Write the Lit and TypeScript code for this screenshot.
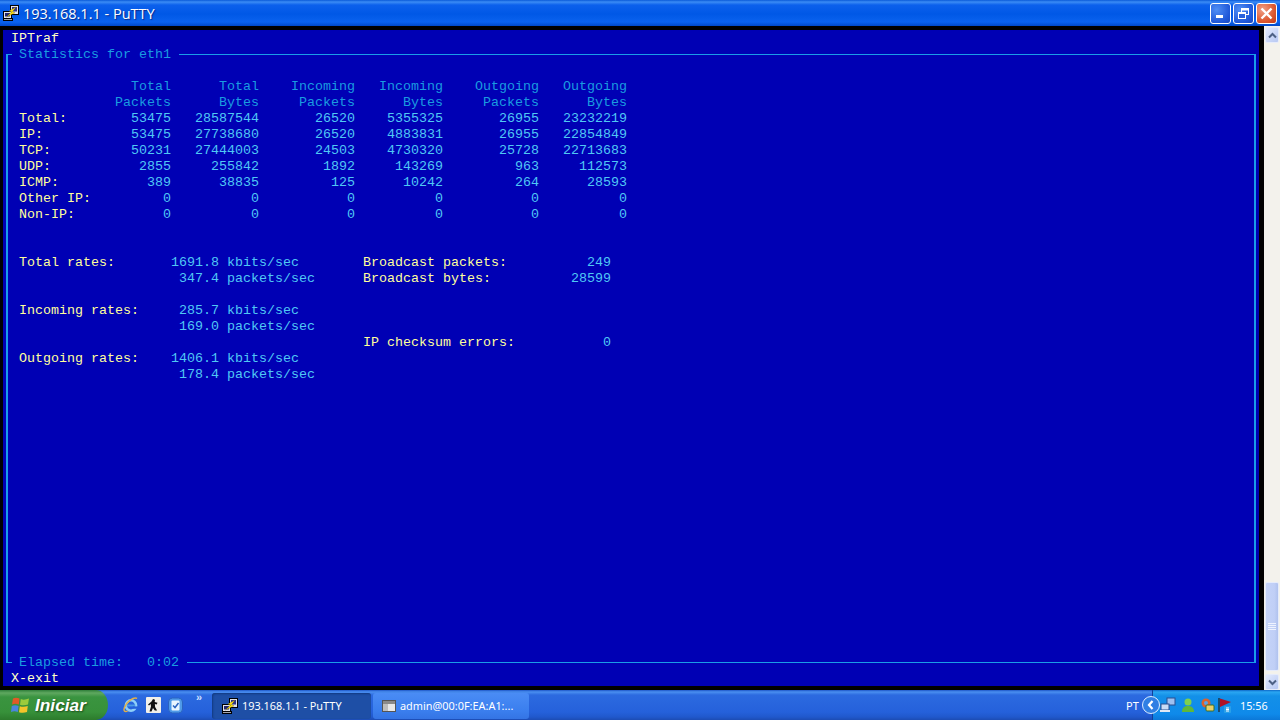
import { LitElement, html, css } from "lit";
import { customElement } from "lit/decorators.js";

const tableHead = [
  ["Total", "Total", "Incoming", "Incoming", "Outgoing", "Outgoing"],
  ["Packets", "Bytes", "Packets", "Bytes", "Packets", "Bytes"],
];
const tableRows: [string, string[]][] = [
  ["Total:", ["53475", "28587544", "26520", "5355325", "26955", "23232219"]],
  ["IP:", ["53475", "27738680", "26520", "4883831", "26955", "22854849"]],
  ["TCP:", ["50231", "27444003", "24503", "4730320", "25728", "22713683"]],
  ["UDP:", ["2855", "255842", "1892", "143269", "963", "112573"]],
  ["ICMP:", ["389", "38835", "125", "10242", "264", "28593"]],
  ["Other IP:", ["0", "0", "0", "0", "0", "0"]],
  ["Non-IP:", ["0", "0", "0", "0", "0", "0"]],
];
const ends = [19, 30, 42, 53, 65, 76];

function line(parts: { at: number; text: string; cls: string; right?: boolean }[]) {
  let col = 0;
  const out: unknown[] = [];
  for (const p of parts) {
    const start = p.right ? p.at - p.text.length : p.at;
    if (start > col) out.push(" ".repeat(start - col));
    out.push(html`<span class=${p.cls}>${p.text}</span>`);
    col = start + p.text.length;
  }
  return html`<div class="row">${out}</div>`;
}

const rates: { label?: string; num: string; unit: string; extra?: [string, string] }[] = [
  { label: "Total rates:", num: "1691.8", unit: "kbits/sec", extra: ["Broadcast packets:", "249"] },
  { num: "347.4", unit: "packets/sec", extra: ["Broadcast bytes:", "28599"] },
  { num: "", unit: "" },
  { label: "Incoming rates:", num: "285.7", unit: "kbits/sec" },
  { num: "169.0", unit: "packets/sec" },
  { num: "", unit: "", extra: ["IP checksum errors:", "0"] },
  { label: "Outgoing rates:", num: "1406.1", unit: "kbits/sec" },
  { num: "178.4", unit: "packets/sec" },
];

const puttyIcon = (s: number) => html`<svg width=${s} height=${s} viewBox="0 0 16 16">
  <rect x="7.500" y="0.500" width="8" height="9" fill="#e4e4ea" stroke="#000"/>
  <rect x="9" y="2" width="5" height="4.500" fill="#2f3488"/>
  <rect x="0.500" y="6.500" width="8" height="7" fill="#e4e4ea" stroke="#000"/>
  <rect x="2" y="8" width="5" height="3.500" fill="#23276e"/>
  <rect x="0.500" y="13.500" width="9" height="2" fill="#a8a8b0" stroke="#000"/>
  <path d="M13 2 L6 6 L8.600 7 L3.500 12 L12 7.800 L9.500 6.800 Z" fill="#ffe414" stroke="#5e4f00" stroke-width=".3"/>
</svg>`;

const flag = html`<svg width="18" height="17" viewBox="0 0 18 17">
  <path d="M2 1.500 Q5 0 8.500 1.500 L7.800 7.500 Q4.500 6 1 7.500 Z" fill="#e05a28"/>
  <path d="M9.800 2 Q13 3.500 18 1.500 L17 7.500 Q13 9 9 7.800 Z" fill="#9ccb3c"/>
  <path d="M.8 9 Q4 7.500 7.600 9 L6.800 15 Q3.500 13.500 0 15 Z" fill="#4a86de"/>
  <path d="M8.800 9.200 Q12.500 10.500 16.800 9 L16 15 Q12 16.500 8 15.200 Z" fill="#f4c42a"/>
</svg>`;

@customElement("app-root")
export class AppRoot extends LitElement {
  static styles = css`
    :host { display: block; width: 1280px; height: 720px; overflow: hidden; background: #000; }
    .win { display: flex; flex-direction: column; height: 720px; }
    .title {
      height: 26px; flex: none; display: flex; align-items: center; padding: 0 2px 0 3px; gap: 4px;
      background: linear-gradient(180deg, #0a5ad8 0, #3b8cf5 2px, #0c60ec 5px, #0058e6 14px, #0a62ee 22px, #0048c8 26px);
      color: #fff; font: 14.500px "Open Sans", sans-serif; text-shadow: 1px 1px 1px #0a2a8a;
    }
    .title-text { flex: 1; }
    .wbtns { display: flex; gap: 2px; padding-right: 1px; }
    .wb {
      width: 21px; height: 21px; box-sizing: border-box; border: 1px solid #fff; border-radius: 3px;
      background: radial-gradient(circle at 30% 30%, #4f8ef5, #1f57d8 70%, #1a49c0);
      display: flex; align-items: center; justify-content: center;
    }
    .wb.close { background: radial-gradient(circle at 30% 30%, #f0a088, #dd5a32 60%, #c23a18); }
    .main { height: 664px; flex: none; display: flex; background: #000; }
    .termwrap { width: 1264px; box-sizing: border-box; padding: 4px 5px 4px 3px; flex: none; }
    .term {
      height: 656px; background: #0000b4; font: 13.333px/16px "Liberation Mono", monospace;
      color: #ffffa8; display: flex; flex-direction: column;
    }
    .row { height: 16px; flex: none; white-space: pre; line-height: 18px; }
    .pale { color: #ffffc4; }
    .lab { color: #ffff9c; }
    .num { color: #50c8f4; }
    .head { color: #1a9ce0; }
    .box { flex: 1; display: flex; flex-direction: column; margin: 0 3px 0 3px; }
    .boxhead, .boxfoot { height: 16px; flex: none; display: flex; color: #1a9ce0; white-space: pre; line-height: 18px; }
    .c1, .c2 { box-sizing: border-box; }
    .c1 { width: 6px; margin-right: 7px; flex: none; }
    .c2 { flex: 1; margin-left: 8px; }
    .boxhead .c1 { margin-top: 8px; border-top: 1px solid #1a9ce8; border-left: 2px solid #1a9ce8; }
    .boxhead .c2 { margin-top: 8px; border-top: 1px solid #1a9ce8; border-right: 2px solid #1a9ce8; }
    .boxfoot .c1 { height: 9px; border-bottom: 1px solid #1a9ce8; border-left: 2px solid #1a9ce8; }
    .boxfoot .c2 { height: 9px; border-bottom: 1px solid #1a9ce8; border-right: 2px solid #1a9ce8; }
    .boxbody { flex: 1; border-left: 2px solid #1a9ce8; border-right: 2px solid #1a9ce8; padding-left: 11px; }
    .sb { width: 16px; flex: none; background: #f3f2ec; display: flex; flex-direction: column; padding: 1px 0 0 1px; box-sizing: border-box; }
    .sbb {
      width: 14px; height: 16px; flex: none; box-sizing: border-box; border: 1px solid #e6ecfb; border-radius: 2px;
      background: linear-gradient(135deg, #e2eafe, #b7c8f2); display: flex; align-items: center; justify-content: center;
    }
    .track { flex: 1; display: flex; flex-direction: column; justify-content: flex-end; padding-bottom: 3px; }
    .thumb {
      height: 89px; box-sizing: border-box; border: 1px solid #e6ecfb; border-radius: 2px; width: 14px;
      background: linear-gradient(90deg, #c4d3f8, #c0cff6 70%, #b0c2ee); display: flex; align-items: center; justify-content: center;
    }
    .task {
      height: 30px; flex: none; display: flex; align-items: stretch;
      background: linear-gradient(180deg, #1e56c8 0, #4a8ff0 2px, #2c6ae0 5px, #2561db 22px, #2058cc 27px, #1c4cb4 30px);
      color: #fff; font: 11px "Noto Sans", sans-serif;
    }
    .start {
      width: 108px; flex: none; display: flex; align-items: center; gap: 6px; padding-left: 11px; box-sizing: border-box;
      border-radius: 0 12px 12px 0 / 0 15px 15px 0;
      background: linear-gradient(180deg, #2f7f3a 0, #5fa860 3px, #3a9440 7px, #37913a 22px, #2c7a2c 30px);
      color: #fff; font: italic bold 17.300px "Liberation Sans", sans-serif; text-shadow: 1px 1px 2px #1a4a1a;
    }
    .quick { width: 104px; flex: none; display: flex; align-items: center; gap: 7px; padding-left: 14px; box-sizing: border-box; }
    .more { font: bold 11px "Liberation Sans", sans-serif; color: #cfe0ff; align-self: flex-start; margin-left: 6px; line-height: 14px; }
    .tb {
      height: 26px; align-self: center; margin-top: 1px; box-sizing: border-box; border-radius: 3px; display: flex; align-items: center; gap: 4px; padding-left: 9px;
      overflow: hidden; white-space: nowrap; font-size: 10.900px;
    }
    .tb.on { width: 159px; background: #1e4fa6; box-shadow: inset 1px 1px 2px #123a80; margin-right: 2px; padding-left: 10px; }
    .tb.off { width: 156px; background: linear-gradient(180deg, #4a8cf5, #3a7eee 70%, #3474e4); }
    .spacer { flex: 1; }
    .lang { width: 26px; display: flex; align-items: center; flex: none; }
    .tray {
      width: 128px; flex: none; box-sizing: border-box; display: flex; align-items: center; gap: 4px;
      background: linear-gradient(180deg, #0e68c8 0, #2aa6f2 2px, #1390e8 6px, #0f8aea 24px, #0c78d8 30px);
      border-left: 1px solid #123f98;
    }
    .chev { margin: 0 -4px 0 -11px; }
    .clock { margin-left: 3px; font-size: 10.800px; }
    .flagico { margin-left: -3px; }
    svg { display: block; flex: none; }
  `;

  render() {
    return html`<div class="win">
      <div class="title">
        ${puttyIcon(16)}
        <span class="title-text">193.168.1.1 - PuTTY</span>
        <div class="wbtns">
          <div class="wb"><svg width="13" height="13" viewBox="0 0 13 13"><rect x="2" y="8" width="7" height="3" fill="#fff"/></svg></div>
          <div class="wb"><svg width="13" height="13" viewBox="0 0 13 13" fill="none" stroke="#fff"><rect x="4.500" y="1.500" width="7" height="6"/><path d="M4.500 2.500h7" stroke-width="2"/><rect x="1.500" y="5.500" width="7" height="6" fill="#2a62dc"/><path d="M1.500 6h7" stroke-width="2"/></svg></div>
          <div class="wb close"><svg width="15" height="15" viewBox="0 0 15 15"><path d="M2.500 2.500l10 10M12.500 2.500l-10 10" stroke="#fff" stroke-width="2.400"/></svg></div>
        </div>
      </div>
      <div class="main">
        <div class="termwrap"><div class="term">
          ${line([{ at: 1, text: "IPTraf", cls: "pale" }])}
          <div class="box">
            <div class="boxhead"><span class="c1"></span><span>Statistics for eth1</span><span class="c2"></span></div>
            <div class="boxbody">
              <div class="row"></div>
              ${tableHead.map((h) => line(h.map((t, i) => ({ at: ends[i], text: t, cls: "head", right: true }))))}
              ${tableRows.map(([l, v]) => line([{ at: 0, text: l, cls: "lab" }, ...v.map((t, i) => ({ at: ends[i], text: t, cls: "num", right: true }))]))}
              <div class="row"></div><div class="row"></div>
              ${rates.map((r) => {
                const parts: { at: number; text: string; cls: string; right?: boolean }[] = [];
                if (r.label) parts.push({ at: 0, text: r.label, cls: "lab" });
                if (r.num) {
                  parts.push({ at: 25, text: r.num, cls: "num", right: true });
                  parts.push({ at: 26, text: r.unit, cls: "num" });
                }
                if (r.extra) {
                  parts.push({ at: 43, text: r.extra[0], cls: "lab" });
                  parts.push({ at: 74, text: r.extra[1], cls: "num", right: true });
                }
                return line(parts);
              })}
            </div>
            <div class="boxfoot"><span class="c1"></span><span>Elapsed time:   0:02</span><span class="c2"></span></div>
          </div>
          ${line([{ at: 1, text: "X-exit", cls: "pale" }])}
        </div></div>
        <div class="sb">
          <div class="sbb"><svg width="9" height="7" viewBox="0 0 9 7" fill="none" stroke="#4d6185" stroke-width="2"><path d="M1 5.500l3.500-3.500 3.500 3.500"/></svg></div>
          <div class="track"><div class="thumb"><svg width="8" height="8" viewBox="0 0 8 8" stroke="#eef3ff"><path d="M0 .5h8M0 2.500h8M0 4.500h8M0 6.500h8"/></svg></div></div>
          <div class="sbb"><svg width="9" height="7" viewBox="0 0 9 7" fill="none" stroke="#4d6185" stroke-width="2"><path d="M1 1.500l3.500 3.500 3.500-3.500"/></svg></div>
        </div>
      </div>
      <div class="task">
        <div class="start">${flag}<span>Iniciar</span></div>
        <div class="quick">
          <svg width="17" height="18" viewBox="0 0 18 18" fill="none"><circle cx="9.500" cy="9.500" r="5.500" stroke="#8fd0f8" stroke-width="2.600"/><path d="M5 9.500h9" stroke="#4c9ce8" stroke-width="2"/><path d="M16 2C12 .5 5 5 2.500 12c-1 3 0 4.500 3.500 3.500" stroke="#e2b048" stroke-width="1.500"/><rect x="11.500" y="10.500" width="5" height="2.500" fill="#2561db"/></svg>
          <svg width="15" height="16" viewBox="0 0 15 16"><rect width="15" height="16" rx="1" fill="#f2f0ea"/><path d="M7 2l2 .8-.3 2.200 2.800.8-.8 1.600-1.800-.5 .2 3 2 3.600H8.800L7 11 5.500 14.500H3.500l1.500-5L4.700 7 3 8.500 2 7.500 5.500 4.500Z" fill="#111"/></svg>
          <svg width="15" height="17" viewBox="0 0 15 17"><rect x=".5" y="1" width="14" height="15" rx="4" fill="#4f9ae8" stroke="#2a63c0"/><rect x="3.500" y="3.500" width="8" height="10" rx="1" fill="#eaf6ff"/><path d="M5 8.500l2 2 3.500-4.500" fill="none" stroke="#2a63c0" stroke-width="1.500"/></svg>
          <span class="more">»</span>
        </div>
        <div class="tb on">${puttyIcon(16)}<span>193.168.1.1 - PuTTY</span></div>
        <div class="tb off"><svg width="14" height="12" viewBox="0 0 14 12"><rect x=".5" y=".5" width="13" height="11" fill="#e8e8e8" stroke="#555"/><rect x="1" y="1" width="12" height="3" fill="#8a8a8a"/><rect x="1" y="4" width="5" height="7" fill="#bdbdbd"/></svg><span>admin@00:0F:EA:A1:...</span></div>
        <div class="spacer"></div>
        <div class="lang">PT</div>
        <div class="tray">
          <svg class="chev" width="18" height="18" viewBox="0 0 18 18"><circle cx="9" cy="9" r="8.500" fill="#2f7fe4" stroke="#dcecff"/><path d="M10.500 5L7 9l3.500 4" fill="none" stroke="#fff" stroke-width="2.200"/></svg>
          <svg width="16" height="16" viewBox="0 0 16 16"><rect x="7" y="1" width="8" height="7" fill="#9ec0f0" stroke="#2a4f90"/><rect x="1" y="7" width="8" height="6" fill="#c8dcf6" stroke="#2a4f90"/><rect x="0" y="13" width="10" height="2" fill="#dfe8f4"/></svg>
          <svg width="16" height="16" viewBox="0 0 16 16"><circle cx="8" cy="5" r="3.500" fill="#7ed04e"/><path d="M2 15c0-5 3-6 6-6s6 1 6 6Z" fill="#5fb83a"/></svg>
          <svg width="16" height="16" viewBox="0 0 16 16"><circle cx="6" cy="6" r="4.500" fill="#d9632f"/><circle cx="6" cy="6" r="2" fill="#5aa3e8"/><rect x="6" y="8" width="8" height="6" rx="1" fill="#e8d06a" stroke="#3b6d2a"/></svg>
          <svg class="flagico" width="16" height="17" viewBox="0 0 16 17"><path d="M2 1v14" stroke="#222" stroke-width="1.200"/><path d="M3 1.500L14 5 3 10Z" fill="#b01226"/><rect x="7" y="9" width="7" height="7" rx="1" fill="#2aa0e8"/><path d="M9 11h3M9 12.500h3M9 14h3" stroke="#fff"/></svg>
          <span class="clock">15:56</span>
        </div>
      </div>
    </div>`;
  }
}
